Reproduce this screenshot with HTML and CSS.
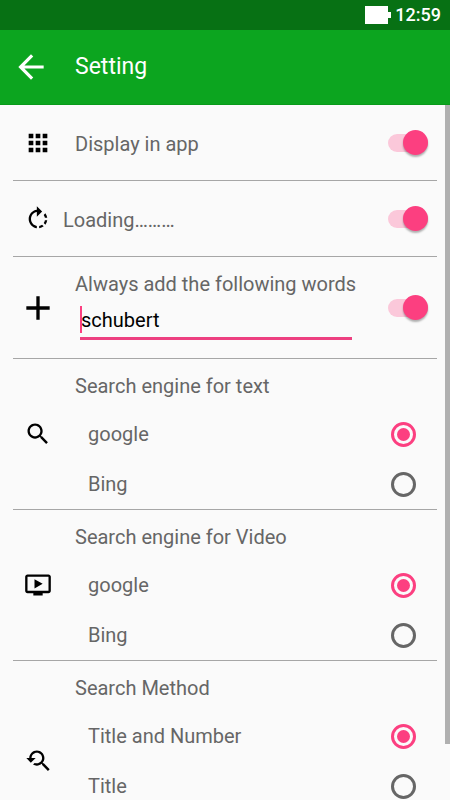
FILE: index.html
```html
<!DOCTYPE html>
<html lang="en">
<head>
  <meta charset="UTF-8" />
  <meta name="viewport" content="width=device-width, initial-scale=1.0" />
  <title>Setting</title>
  <link rel="stylesheet" href="styles.css">
</head>
<body>
  <div class="status-bar">
    <svg class="battery" width="26" height="18" viewBox="0 0 26 18" aria-hidden="true"><path d="M0 0h23v6h3v6h-3v6H0z"/></svg>
    <span>12:59</span>
  </div>

  <header class="app-bar">
    <button type="button" class="back" aria-label="Back">
      <svg width="38" height="38" viewBox="0 0 24 24"><path d="M20 11H7.83l5.59-5.59L12 4l-8 8 8 8 1.41-1.41L7.83 13H20v-2z"/></svg>
    </button>
    <h1>Setting</h1>
  </header>

  <main class="content">
    <form class="settings">
      <div class="row">
        <svg class="icon" viewBox="0 0 24 24" aria-hidden="true"><path d="M4 8h4V4H4v4zm6 12h4v-4h-4v4zm-6 0h4v-4H4v4zm0-6h4v-4H4v4zm6 0h4v-4h-4v4zm6-10v4h4V4h-4zm-6 4h4V4h-4v4zm6 6h4v-4h-4v4zm0 6h4v-4h-4v4z"/></svg>
        <label class="text" for="display">Display in app</label>
        <input type="checkbox" class="switch" id="display" checked />
      </div>

      <div class="row row-loading">
        <svg class="icon" viewBox="0 0 24 24" aria-hidden="true"><path d="M15.55 5.55L11 1v3.07C7.06 4.56 4 7.92 4 12s3.05 7.44 7 7.93v-2.02c-2.84-.48-5-2.94-5-5.91s2.16-5.43 5-5.91V10l4.55-4.45zM19.93 11c-.17-1.39-.72-2.73-1.62-3.89l-1.42 1.42c.54.75.88 1.6 1.02 2.47h2.02zM13 17.9v2.02c1.39-.17 2.74-.71 3.9-1.61l-1.44-1.44c-.75.54-1.59.89-2.46 1.03zm3.89-2.42l1.42 1.41c.9-1.16 1.45-2.5 1.62-3.89h-2.02c-.14.87-.48 1.72-1.02 2.48z"/></svg>
        <label class="text" for="loading">Loading………</label>
        <input type="checkbox" class="switch" id="loading" checked />
      </div>

      <div class="row row-words">
        <svg class="icon icon-large" viewBox="0 0 24 24" aria-hidden="true"><path d="M19 13h-6v6h-2v-6H5v-2h6V5h2v6h6v2z"/></svg>
        <div class="words">
          <label for="add-words">Always add the following words</label>
          <div class="field">
            <input type="text" id="words" aria-label="Words to add" value="schubert" />
            <span class="caret"></span>
          </div>
        </div>
        <input type="checkbox" class="switch" id="add-words" checked />
      </div>

      <fieldset class="group">
        <svg class="icon" viewBox="0 0 24 24" aria-hidden="true"><path d="M15.5 14h-.79l-.28-.27C15.41 12.59 16 11.11 16 9.5 16 5.91 13.09 3 9.5 3S3 5.91 3 9.5 5.91 16 9.5 16c1.61 0 3.09-.59 4.23-1.57l.27.28v.79l5 4.99L20.49 19l-4.99-5zm-6 0C7.01 14 5 11.99 5 9.5S7.01 5 9.5 5 14 7.01 14 9.5 11.99 14 9.5 14z"/></svg>
        <div class="options">
          <h2>Search engine for text</h2>
          <label class="option">google <input type="radio" name="text-engine" checked /></label>
          <label class="option">Bing <input type="radio" name="text-engine" /></label>
        </div>
      </fieldset>

      <fieldset class="group">
        <svg class="icon" viewBox="0 0 24 24" aria-hidden="true"><path d="M21 3H3c-1.11 0-2 .89-2 2v12c0 1.1.89 2 2 2h5v2h8v-2h5c1.1 0 1.99-.9 1.99-2L23 5c0-1.11-.9-2-2-2zm0 14H3V5h18v12zM9 7v8l7-4z"/></svg>
        <div class="options">
          <h2>Search engine for Video</h2>
          <label class="option">google <input type="radio" name="video-engine" checked /></label>
          <label class="option">Bing <input type="radio" name="video-engine" /></label>
        </div>
      </fieldset>

      <fieldset class="group group-tall">
        <svg class="icon" viewBox="0 0 24 24" aria-hidden="true"><path d="M17.01 14h-.8l-.27-.27c.98-1.14 1.57-2.61 1.57-4.23 0-3.59-2.91-6.5-6.5-6.5s-6.5 3-6.5 6.5H2l3.84 4 4.16-4H6.51C6.51 7 8.53 5 11.01 5s4.5 2.01 4.5 4.5c0 2.48-2.02 4.5-4.5 4.5-.65 0-1.26-.14-1.82-.38L7.71 15.1c.97.57 2.09.9 3.3.9 1.61 0 3.08-.59 4.22-1.57l.27.27v.79l5.01 4.99L22 19l-4.99-5z"/></svg>
        <div class="options">
          <h2>Search Method</h2>
          <label class="option">Title and Number <input type="radio" name="method" checked /></label>
          <label class="option">Title <input type="radio" name="method" /></label>
        </div>
      </fieldset>
    </form>
    <div class="scrollbar"></div>
  </main>
</body>
</html>
```

FILE: styles.css
```css
:root {
  --green: #0ca51f;
  --green-dark: #077114;
  --accent: #fc3f80;
  --accent-light: #fbc8da;
  --bg: #fafafa;
  --text: #666666;
  --line: #a6a6a6;
}

* {
  box-sizing: border-box;
}

body {
  display: flex;
  flex-direction: column;
  height: 100vh;
  margin: 0;
  overflow: hidden;
  font-family: Roboto, sans-serif;
  font-size: 20px;
  line-height: 24px;
  background: var(--bg);
  color: var(--text);
}

.status-bar {
  display: flex;
  flex: none;
  align-items: center;
  justify-content: flex-end;
  gap: 4px;
  height: 30px;
  padding: 0 9px;
  background: var(--green-dark);
  color: #fff;
  font-size: 18px;
  font-weight: 500;
}

.battery {
  fill: #fff;
}

.app-bar {
  display: flex;
  flex: none;
  align-items: center;
  gap: 25px;
  height: 75px;
  padding: 0 12px;
  background: var(--green);
  border-bottom: 1px solid #099a1a;
  color: #fff;
}

.app-bar h1 {
  margin: 0;
  font-size: 23px;
  font-weight: 400;
}

.back {
  display: flex;
  padding: 0;
  background: none;
  border: none;
  cursor: pointer;
}

.back svg {
  fill: #fff;
}

.content {
  position: relative;
  flex: 1;
  min-height: 0;
  overflow: hidden;
}

.settings {
  padding: 0 13px;
}

.scrollbar {
  position: absolute;
  top: 0;
  right: 0;
  width: 5px;
  height: 92%;
  background: #b0b0b0;
}

.row,
.group {
  display: flex;
  align-items: center;
  border-bottom: 1px solid var(--line);
}

.row {
  height: 76px;
  padding-right: 9px;
}

.icon {
  flex: none;
  width: 28px;
  height: 28px;
  margin: 0 23px 0 11px;
  fill: #000;
}

.icon-large {
  width: 40px;
  height: 40px;
  margin: 0 17px 0 5px;
}

.text {
  flex: 1;
  padding-top: 3px;
}

.row-loading .icon {
  margin-right: 11px;
}

.row-words {
  height: 102px;
}

.words {
  flex: 1;
}

.field {
  position: relative;
  width: 272px;
  margin: 8px 0 0 5px;
}

.field input {
  display: block;
  width: 100%;
  height: 36px;
  padding: 0 0 1px 1px;
  background: none;
  border: none;
  border-bottom: 3px solid #ed3f80;
  border-radius: 0;
  outline: none;
  color: #000;
  font: inherit;
}

.words {
  padding-bottom: 3px;
}

.caret {
  position: absolute;
  top: 2px;
  left: 0;
  width: 2px;
  height: 27px;
  background: var(--accent);
}

/* toggle */
.switch {
  position: relative;
  flex: none;
  appearance: none;
  width: 40px;
  height: 18px;
  margin: 0;
  border-radius: 9px;
  background: #c4c4c4;
  cursor: pointer;
}

.switch::before {
  content: "";
  position: absolute;
  top: -4px;
  left: 0;
  width: 25px;
  height: 25px;
  border-radius: 50%;
  background: #f1f1f1;
  box-shadow: 0 2px 2px rgba(0, 0, 0, 0.3);
}

.switch:checked {
  background: var(--accent-light);
}

.switch:checked::before {
  left: 15px;
  background: var(--accent);
}

/* radio groups */
.group {
  min-width: 0;
  margin: 0;
  padding: 0;
  border-width: 0 0 1px;
}

.group-tall {
  height: 201px;
}

.options {
  flex: 1;
  align-self: flex-start;
}

.options h2 {
  height: 50px;
  margin: 0;
  padding-top: 15px;
  font-size: 20px;
  font-weight: 400;
}

.option {
  display: flex;
  align-items: center;
  justify-content: space-between;
  height: 50px;
  padding: 0 21px 0 13px;
}

.option input {
  display: grid;
  place-content: center;
  appearance: none;
  width: 25px;
  height: 25px;
  margin: 0;
  border: 3px solid var(--text);
  border-radius: 50%;
  cursor: pointer;
}

.option input:checked {
  border-color: var(--accent);
}

.option input:checked::before {
  content: "";
  width: 13px;
  height: 13px;
  border-radius: 50%;
  background: var(--accent);
}
```
